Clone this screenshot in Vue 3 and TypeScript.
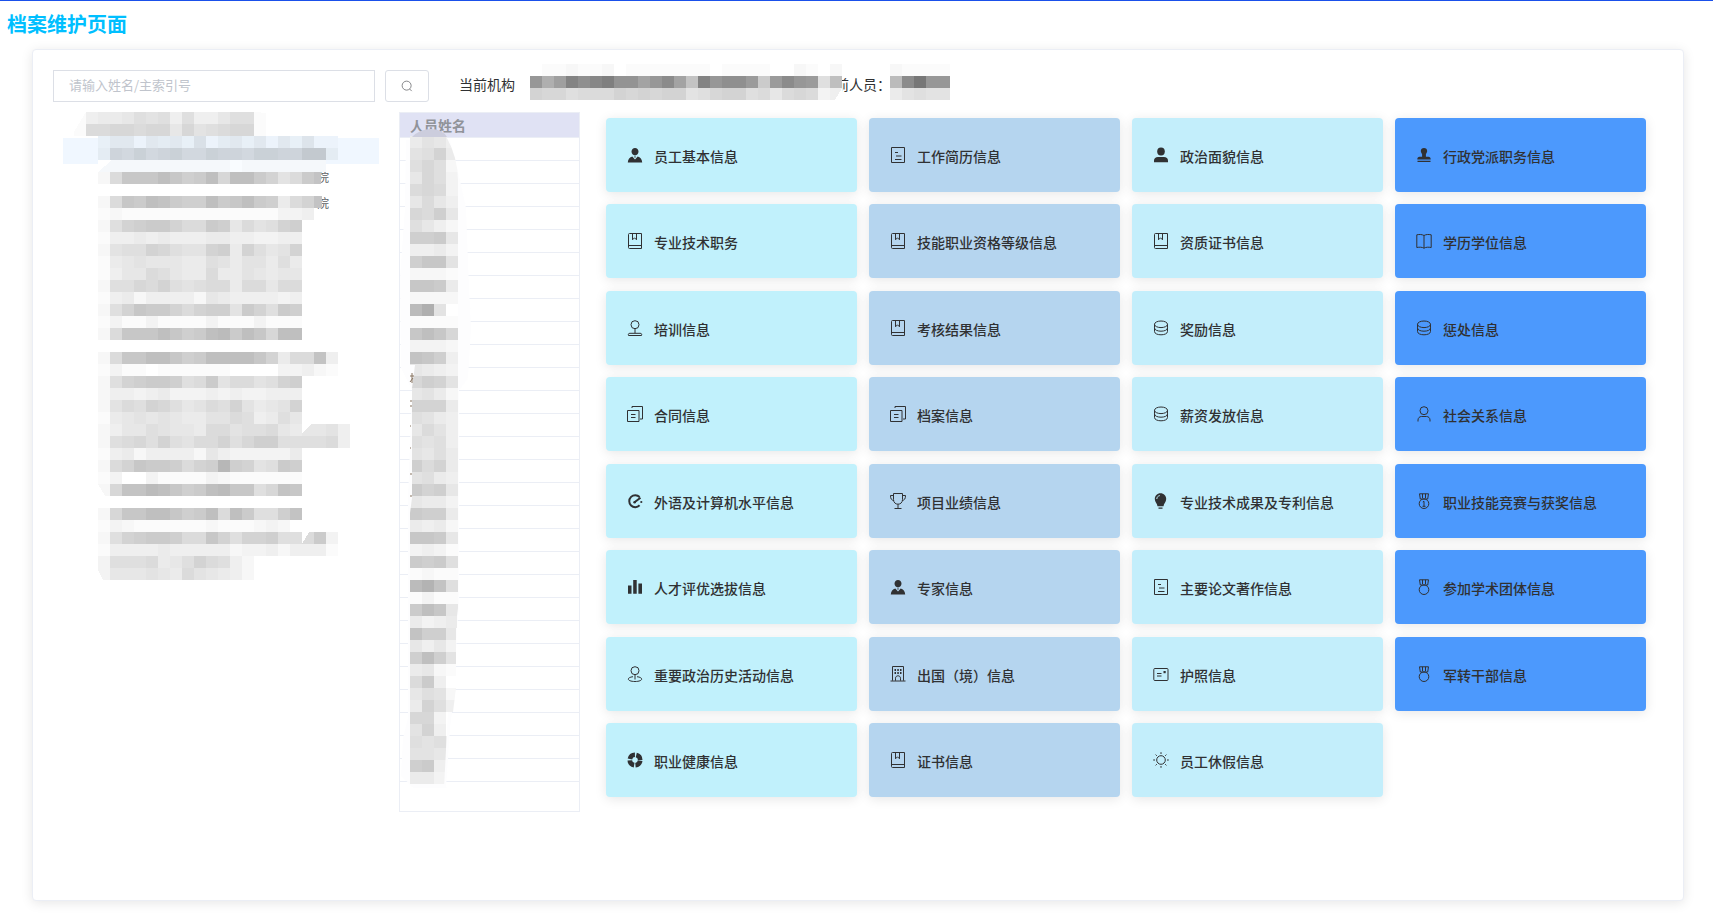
<script setup lang="ts">
import { ref } from 'vue'

interface Cell { x: number; y: number; w: number; fill: string }

const CELL = 12

/* Each character is one block: base-36 darkness, "." leaves the block empty. */
function toCells(rows: string[], tints: Record<number, number> = {}): Cell[] {
  const cells: Cell[] = []
  rows.forEach((row, r) => {
    const tint = tints[r] ?? 0
    Array.from(row).forEach((ch, c) => {
      if (ch === '.') return
      const g = 255 - parseInt(ch, 36) * 4
      const red = Math.round(g * (1 - 0.06 * tint))
      const green = Math.round(g * (1 - 0.03 * tint))
      cells.push({ x: c * CELL, y: r * CELL, w: CELL, fill: `rgb(${red}, ${green}, ${g})` })
    })
  })
  return cells
}

const treeCells = toCells([
  '1455687848446881',
  '199aa9aa6a789aa1',
  '..24414342613424142511',
  '..398a89a88a998aa99cc3',
  '..1111111111101111111',
  '..29eeegecdgaggdb79d',
  '',
  '..29edgfdccgdegdc59b',
  '..121111111111111334',
  '..28bcddb99dc6978bc',
  '..14454544455443344',
  '..2788ba877bc5b867b',
  '..15676665587577585',
  '..14669865595576566',
  '..288a9b87899599699',
  '..14524444265444434',
  '..28beddb9bcc7db8dc',
  '..13113111131113111',
  '..29eeegecdghdgeagg',
  '',
  '..29eeggecdggggeb599f4',
  '..13110111111000033421',
  '..28bcddc89d79978bc',
  '..24434533343433444',
  '..2798ba86798b7567b',
  '..15676765577984586',
  '..246687665997889656674',
  '..289a8b8799b8acc888894',
  '..14524444264333335',
  '..29beddc9bcicb78dc',
  '..13003111132111111',
  '..2affhgecdghee8afe',
  '',
  '..2aeeggecdg9gd88cf',
  '..1321111112111232',
  '..28bcddc99eb8bbc889d3',
  '..14444544444233424441',
  '..38889568b9842',
  '..3666765976542',
], { 2: 1, 3: 1, 4: 0.4 })

const nameCells = toCells([
  '5764', '78b5', '8a82', '6a83', '9a93', '6964', 'a9c6', '8642', 'ccd6', '4453',
  'cee7', '2221', 'eed5', '2222', 'hk70', '1111', 'egea', '3332', 'fec4', '6543',
  'acb7', '6752', 'bbb5', '8754', '6974', '8784', '7685', 'c9b5', '7854', 'dbc6',
  '6553', 'dcc5', '5452', 'eed6', '3431', 'dcd8', '1211', 'hjf8', '1311', 'dge6',
  '5345', 'fcc6', '6463', 'cgc7', '5621', '9d40', '6872', '5b84', 'aa30', '7b40',
  '8785', '7763', 'cd40', '5530',
])

const orgCells = toCells([
  '.11211201111111011110021.2',
  'qkovsuwrrnqtnfvqsspdptqp8g',
  'baa8999bababb78abb8969a934',
])
const personCells = toCells(['21111', 'htyqq', '57877'])

const keyword = ref('')
const treeNodes = ['', '', '院', '院', '', '', '', '', '', '', '', '', '', '', '', '', '', '']
const selectedNode = 1
const personRows = 28

const entries: [string, string][] = [
  ['custom', '员工基本信息'], ['document', '工作简历信息'], ['user-solid', '政治面貌信息'], ['stamp', '行政党派职务信息'],
  ['book', '专业技术职务'], ['book', '技能职业资格等级信息'], ['book', '资质证书信息'], ['reading', '学历学位信息'],
  ['lectern', '培训信息'], ['book', '考核结果信息'], ['coin', '奖励信息'], ['coin', '惩处信息'],
  ['copy', '合同信息'], ['copy', '档案信息'], ['coin', '薪资发放信息'], ['user', '社会关系信息'],
  ['gauge', '外语及计算机水平信息'], ['trophy', '项目业绩信息'], ['bulb', '专业技术成果及专利信息'], ['medal-first', '职业技能竞赛与获奖信息'],
  ['bars', '人才评优选拔信息'], ['custom', '专家信息'], ['document', '主要论文著作信息'], ['medal', '参加学术团体信息'],
  ['place', '重要政治历史活动信息'], ['building', '出国（境）信息'], ['postcard', '护照信息'], ['medal', '军转干部信息'],
  ['ring', '职业健康信息'], ['book', '证书信息'], ['sun', '员工休假信息'],
]
</script>

<template>
  <svg class="sprite" aria-hidden="true">
    <symbol id="search" viewBox="0 0 16 16"><circle cx="7.5" cy="7.5" r="6" /><path d="M11.5 12l2.800 2.800" /></symbol>
    <symbol id="custom" viewBox="0 0 16 16">
      <path class="solid" d="M8 .9c2 0 3.500 1.500 3.500 3.600S10 8.400 8 8.400 4.500 6.600 4.500 4.500 6 .9 8 .9zM5.300 9.400 8 12.600l2.700-3.200c2.600.7 4.300 2.800 4.500 6H.8c.2-3.200 1.900-5.300 4.500-6z" />
      <path class="solid" d="M7 9.500h2l-1 1.600z" />
    </symbol>
    <symbol id="user-solid" viewBox="0 0 16 16">
      <ellipse class="solid" cx="8" cy="4.600" rx="3.800" ry="4" />
      <path class="solid" d="M1 15.300v-1.800C1 11.500 2.700 10 5 10h6c2.300 0 4 1.500 4 3.500v1.800z" />
    </symbol>
    <symbol id="stamp" viewBox="0 0 16 16">
      <path class="solid" d="M8 .9c1.900 0 3.200 1.300 3.200 3 0 1.200-.9 2.200-1.300 3.300v2.500h2.600c1.400 0 2.200 1 2.200 2.800H1.300c0-1.800.8-2.800 2.200-2.800h2.600V7.200C5.700 6.100 4.800 5.100 4.800 3.900c0-1.700 1.300-3 3.200-3zM1.500 13.800h13v1.300h-13z" />
    </symbol>
    <symbol id="document" viewBox="0 0 16 16">
      <path d="M1.500.5h13v15h-13zM5 5.500h3M6 9h5.500M5 12.500h6.500" />
    </symbol>
    <symbol id="book" viewBox="0 0 16 16">
      <path d="M2.500.5h12v15h-12q-1 0-1-1v-13q0-1 1-1zM1.500 12.500h13M5.500.5v6.300l2-2 2 2V.5" />
    </symbol>
    <symbol id="reading" viewBox="0 0 16 16">
      <path d="M8 2.500v12.700M8 2.500C6 1.300 3.500 1.300.8 1.800v12.700c2.700-.5 5.200-.5 7.200.7 2-1.200 4.500-1.200 7.200-.7V1.800C12.500 1.300 10 1.300 8 2.500z" />
    </symbol>
    <symbol id="lectern" viewBox="0 0 16 16">
      <circle cx="8" cy="4.700" r="4" /><path d="M8 8.700v4.500M1.500 15.500c-.5-1.500 0-2.200 1.500-2.200h10c1.500 0 2 .7 1.500 2.200z" />
    </symbol>
    <symbol id="coin" viewBox="0 0 16 16">
      <ellipse cx="8" cy="4.300" rx="6.500" ry="3.300" />
      <path d="M1.500 4.300v3.600c0 4.400 13 4.400 13 0V4.300M1.500 7.900v3.600c0 4.400 13 4.400 13 0V7.900" />
    </symbol>
    <symbol id="copy" viewBox="0 0 16 16">
      <path d="M.5 4.500h11.500v11H.5zM4 8.500h4.500M4 11.500h4.500M5 .5h10.500v12.500H13M5 .5v1.500" />
    </symbol>
    <symbol id="user" viewBox="0 0 16 16">
      <circle cx="8" cy="4.700" r="4" /><path d="M2 15.500V14c0-2 1.500-3.500 3.500-3.500h5c2 0 3.500 1.500 3.500 3.500v1.500" />
    </symbol>
    <symbol id="gauge" viewBox="0 0 16 16">
      <path class="bold" d="M12.600 12.300A6 6 0 1 1 12.600 4M7.500 9.300 13.500 4.800" />
      <circle class="solid" cx="14.300" cy="9" r="1.100" /><circle class="solid" cx="7.600" cy="9.200" r="1.300" />
    </symbol>
    <symbol id="trophy" viewBox="0 0 16 16">
      <path d="M3.500.5h9v6c0 3-2 4.700-4.500 4.700S3.500 9.500 3.500 6.500zM8 11.200v4M4.500 15.500h7M3.500 2.500h-3c0 3 .8 4.700 3.300 5M12.500 2.500h3c0 3-.8 4.700-3.300 5" />
    </symbol>
    <symbol id="bulb" viewBox="0 0 16 16">
      <path class="solid" d="M7.500.3c3.300 0 5.700 2.500 5.700 5.700 0 2.800-2.400 4.500-2.700 7.300h-6C4.200 10.500 1.800 8.800 1.800 6 1.800 2.800 4.200.3 7.500.3zM5.500 14.500h4v1.300h-4z" />
      <path class="shine" d="M3.800 6c.1-1.900 1.200-3.100 3-3.400" />
    </symbol>
    <symbol id="medal" viewBox="0 0 16 16">
      <circle cx="8" cy="10.700" r="4.800" /><path d="M3.500.8h9l-.8 5.200H4.300zM6.500.8V5M9.500.8V5" />
    </symbol>
    <symbol id="medal-first" viewBox="0 0 16 16">
      <circle cx="8" cy="10.700" r="4.800" /><path d="M3.500.8h9l-.8 5.200H4.300zM6.500.8V5M9.500.8V5M6.800 9 8 8.300v5M6.500 13.300h3" />
    </symbol>
    <symbol id="bars" viewBox="0 0 16 16"><path class="solid" d="M1 6.500h3.500v8.200H1zM6.200 1h3.500v13.700H6.200zM11.400 4.500H15v10.200h-3.600z" /></symbol>
    <symbol id="place" viewBox="0 0 16 16">
      <circle cx="8" cy="4.700" r="4" /><path d="M8 8.700v4.800M6 10.700c-7 .8-6 4.800 2 4.800s9-4 2-4.800" />
    </symbol>
    <symbol id="building" viewBox="0 0 16 16">
      <path d="M2.500 14.700V.5h11v14.200M.5 15h15M5.500 14.700v-2.500c0-3.200 5-3.200 5 0v2.500" />
      <path class="dots" d="M4.500 4h1.500M7.300 4h1.500M10 4h1.500M4.500 7h1.500M7.300 7h1.500M10 7h1.500" />
    </symbol>
    <symbol id="postcard" viewBox="0 0 16 16">
      <rect x=".8" y="2.500" width="14.200" height="12" rx="1" /><path d="M4 7.500h4.500M4 10h4.500" /><path class="solid" d="M10.500 5h2.200v2.200h-2.200z" />
    </symbol>
    <symbol id="ring" viewBox="0 0 16 16">
      <circle class="band" cx="8" cy="8" r="5.200" />
    </symbol>
    <symbol id="sun" viewBox="0 0 16 16">
      <circle cx="8" cy="8" r="4.300" />
      <path d="M8 .2v1.800M8 14v1.800M.2 8H2M14 8h1.800M2.600 2.600l1.200 1.200M12.200 12.200l1.200 1.200M2.600 13.400l1.200-1.200M12.200 3.800l1.200-1.200" />
    </symbol>
  </svg>

  <div class="page">
    <h1 class="title">档案维护页面</h1>
    <main class="panel">
      <form class="toolbar" @submit.prevent>
        <input v-model="keyword" class="search-box" type="text" placeholder="请输入姓名/主索引号" aria-label="请输入姓名/主索引号">
        <button class="search-btn" type="submit" aria-label="搜索"><svg class="search-icon"><use href="#search" /></svg></button>
        <p class="current">
          <span>当前机构</span>
          <svg class="mask-org" viewBox="0 0 312 36" shape-rendering="crispEdges" aria-hidden="true">
            <rect v-for="(c, i) in orgCells" :key="i" :x="c.x" :y="c.y" :width="c.w" :height="c.w" :fill="c.fill" />
            <path d="M312 24v12h-7z" fill="#fff" />
          </svg>
          <span class="person-label">前人员：</span>
          <svg class="mask-person" viewBox="0 0 60 36" shape-rendering="crispEdges" aria-hidden="true">
            <rect v-for="(c, i) in personCells" :key="i" :x="c.x" :y="c.y" :width="c.w" :height="c.w" :fill="c.fill" />
          </svg>
        </p>
      </form>

      <div class="body">
        <section class="tree-panel">
          <ul class="tree">
            <li v-for="(n, i) in treeNodes" :key="i" :class="{ selected: i === selectedNode }">{{ n }}</li>
          </ul>
          <svg class="mask-tree" viewBox="0 0 276 468" shape-rendering="crispEdges" aria-hidden="true">
            <rect v-for="(c, i) in treeCells" :key="i" :x="c.x" :y="c.y" :width="c.w" :height="c.w" :fill="c.fill" />
            <path d="M240 60h7v12h-7zM240 84h8v12h-8z" fill="#c3c3c4" />
            <path d="M0 0h12L0 20zM144 0h36l28 2v-2zM24 60v-12l14 0zM24 372v12h7zM24 468v-10l5 10zM228 312h9l-9 9zM228 420h7l-7 12z" fill="#fff" />
          </svg>
        </section>

        <section class="people">
          <table>
            <thead><tr><th scope="col">人员姓名</th></tr></thead>
            <tbody><tr v-for="n in personRows" :key="n"><td></td></tr></tbody>
          </table>
          <svg class="mask-people" viewBox="0 0 72 660" aria-hidden="true">
            <clipPath id="smear"><path d="M10 8H46Q58 30 58 52V480L57 488V500H56V560L53 584H48L44 660H10V385L12 370V260L15 237H10z" /></clipPath>
            <path d="M6 12H50L59 48 66 80 69 160 71 200 68 250 59 262V480L57 500 55 560 50 600 46 660H14L1 648 3 610 8 590V370L12 262 1 240 0 150 5 80z" fill="#fdfdfe" />
            <g clip-path="url(#smear)" shape-rendering="crispEdges">
              <rect v-for="(c, i) in nameCells" :key="i" :x="c.x + 10" :y="c.y + 8" :width="c.w" :height="c.w" :fill="c.fill" />
            </g>
            <path d="M12 9Q20 1 31 1T47 9z" fill="#cccddd" />
            <path d="M10 248h4M12 245v10M10 254l3-4M10 273h2M10 278h2M10 298h1M10 320h1M10 346h2M10 368h2" stroke="#86725f" fill="none" />
          </svg>
        </section>

        <section class="entries">
          <button v-for="[icon, label] in entries" :key="label" class="entry" type="button">
            <svg class="icon" aria-hidden="true"><use :href="'#' + icon" /></svg>
            <span>{{ label }}</span>
          </button>
        </section>
      </div>
    </main>
  </div>
</template>

<style>
body {
  margin: 0;
  background: #fff;
}
</style>

<style scoped>
* {
  box-sizing: border-box;
}

.sprite {
  position: absolute;
  width: 0;
  height: 0;
}

symbol {
  fill: none;
  stroke: currentColor;
}

.solid {
  fill: currentColor;
  stroke: none;
}

.bold {
  stroke-width: 2;
}

.shine {
  stroke: #c3eefb;
}

.dots {
  stroke-width: 2;
}

.band {
  stroke-width: 4.6;
  stroke-dasharray: 6.77 1.4;
  stroke-dashoffset: -0.7;
}

.page {
  display: flex;
  flex-direction: column;
  min-height: 100vh;
  padding: 0 29px 19px 32px;
  border-top: 1px solid #1a50ea;
  font-family: "Noto Sans CJK SC", "Noto Sans", sans-serif;
  color: #303133;
}

.title {
  margin: 8px 0 10px -25px;
  font-size: 20px;
  line-height: 30px;
  font-weight: 700;
  color: #00bfff;
}

.panel {
  flex: 1;
  padding: 20px 37px 20px 20px;
  border: 1px solid #ebeef5;
  border-radius: 4px;
  background: #fff;
  box-shadow: 0 2px 12px rgba(0, 0, 0, 0.1);
}

.toolbar {
  display: flex;
  height: 32px;
  margin-bottom: 10px;
}

.search-box {
  width: 322px;
  padding: 0 15px 4px;
  border: 1px solid #dcdfe6;
  border-radius: 0;
  outline: none;
  font-family: inherit;
  font-size: 13px;
  color: #606266;
}

.search-box::placeholder {
  color: #c0c4cc;
}

.search-btn {
  display: flex;
  align-items: center;
  justify-content: center;
  width: 44px;
  margin-left: 10px;
  padding: 0;
  border: 1px solid #dcdfe6;
  border-radius: 3px;
  background: #fff;
  color: #606266;
}

.search-icon {
  width: 12px;
  height: 12px;
}

.current {
  display: flex;
  align-items: center;
  height: 30px;
  margin: 0 0 0 30px;
  font-size: 14px;
  white-space: nowrap;
}

.current span {
  padding-bottom: 2px;
}

.mask-org {
  position: relative;
  z-index: 1;
  width: 312px;
  height: 36px;
  margin: 0 0 6px 15px;
}

.person-label {
  width: 48px;
  margin-left: -7px;
}

.mask-person {
  width: 60px;
  height: 36px;
  margin: 0 0 6px 7px;
}

.body {
  display: flex;
  align-items: stretch;
}

.tree-panel {
  position: relative;
  width: 326px;
  padding-left: 10px;
}

.tree {
  margin: 0;
  padding: 0;
  list-style: none;
  font-size: 12px;
  line-height: 26px;
  color: #606266;
}

.tree li {
  height: 26px;
  padding-left: 254px;
}

.tree .selected {
  background: #f0f7ff;
}

.mask-tree {
  position: absolute;
  left: 21px;
  top: 0;
  width: 276px;
  height: 468px;
}

.people {
  position: relative;
  width: 181px;
  min-height: 700px;
  margin-left: 20px;
  border: 1px solid #ebeef5;
}

table {
  width: 100%;
  border-collapse: separate;
  border-spacing: 0;
}

th {
  height: 25px;
  padding: 0 10px;
  border-bottom: 1px solid #ebeef5;
  background: #e0e2f4;
  font-size: 14px;
  line-height: 24px;
  text-align: left;
  color: #909399;
}

td {
  height: 23px;
  padding: 0;
  border-bottom: 1px solid #ebeef5;
}

.mask-people {
  position: absolute;
  left: 0;
  top: 15px;
  width: 72px;
  height: 660px;
}

.entries {
  flex: 1;
  display: grid;
  grid-template-columns: repeat(4, 1fr);
  grid-auto-rows: 74px;
  column-gap: 12px;
  align-content: space-between;
  margin-left: 26px;
  padding: 6px 0 15px;
}

.entry {
  display: flex;
  align-items: center;
  gap: 11px;
  padding: 0 20px;
  border: 1px solid transparent;
  border-radius: 4px;
  box-shadow: 0 2px 12px rgba(0, 0, 0, 0.1);
  background: #c1f1fc;
  font-family: inherit;
  font-size: 14px;
  line-height: 20px;
  text-align: left;
  color: #303133;
}

.entry span {
  padding-top: 2px;
  font-weight: 500;
}

.entry:nth-child(4n + 2) {
  background: #b5d5ef;
}

.entry:nth-child(4n + 3) {
  background: #c3eefb;
}

.entry:nth-child(4n) {
  background: #4c99fd;
}

.icon {
  flex: none;
  width: 16px;
  height: 16px;
}
</style>
